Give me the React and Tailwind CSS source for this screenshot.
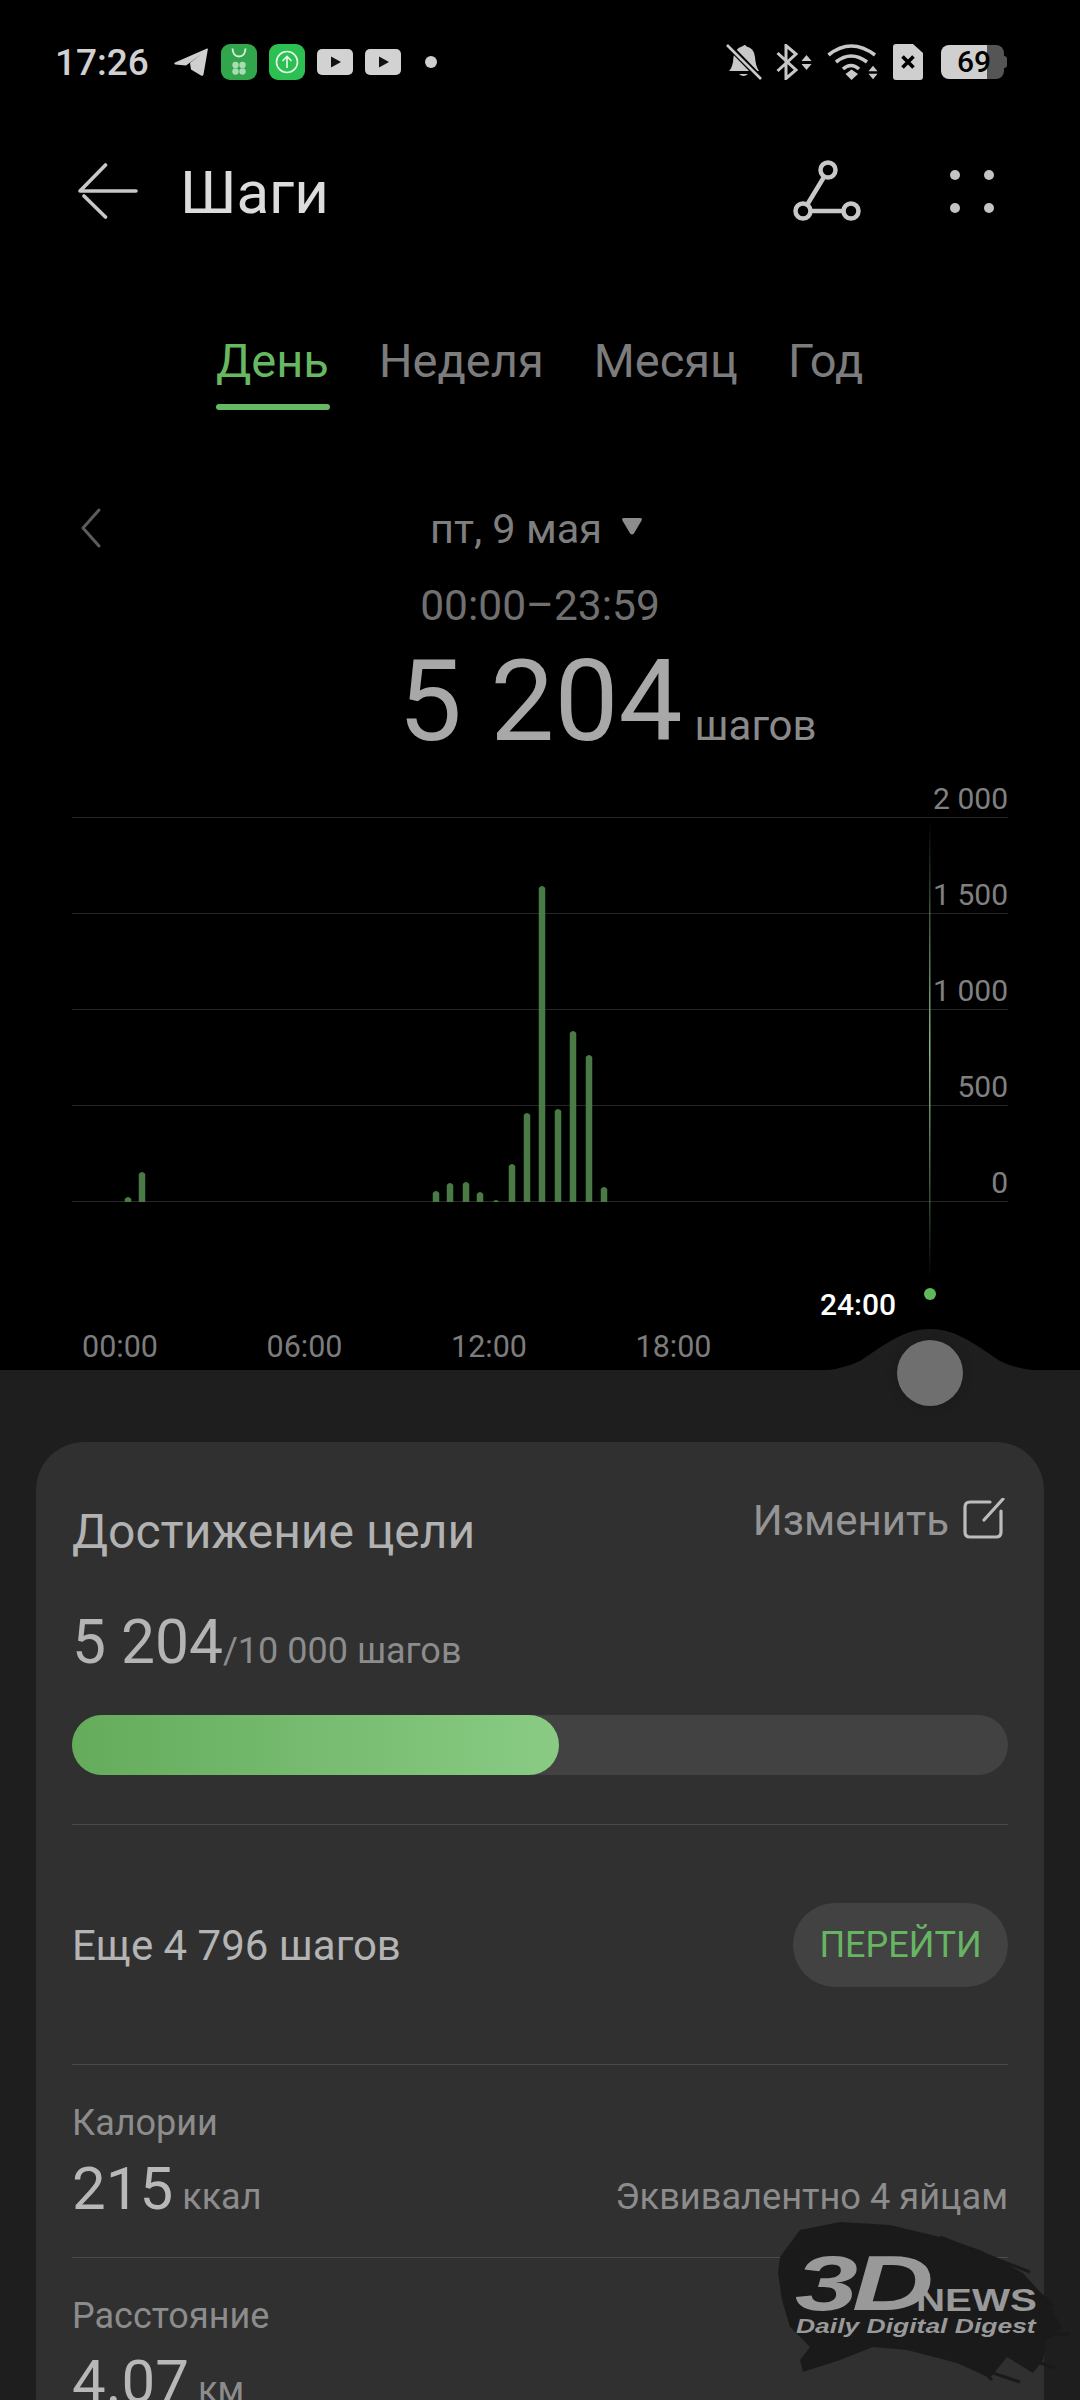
import React from 'react';

const bars = [
    [128, 1196], [142, 1171], [436, 1190], [450, 1182], [466, 1181], [480, 1191], [496, 1199],
    [512, 1163], [527, 1112], [542, 885], [558, 1108], [573, 1030], [589, 1054], [604, 1186],
];

const yLabels = ['1 500', '1 000', '500', '0'];
const xLabels = ['00:00', '06:00', '12:00', '18:00'];

const UpDown = ({ className }) => (
    <svg className={className} viewBox="0 0 11 15" fill="#c8c8c8">
        <path d="M5.5 0L10.5 6H0.5Z" />
        <path d="M5.5 15L10.5 9H0.5Z" />
    </svg>
);

const Youtube = () => (
    <svg className="w-[36px] h-[26px]" viewBox="0 0 36 26">
        <rect width="36" height="26" rx="5" fill="#d2d2d2" />
        <path d="M14 7.5L24 13L14 18.5Z" fill="#111" />
    </svg>
);

const StatusBar = () => (
    <div className="h-[124px] flex items-center pl-[55px] pr-[73px] text-[37px] font-medium text-[#d0d0d0]">
        <span className="w-[119px] leading-none">17:26</span>
        <svg className="w-[34px] h-[28px]" viewBox="0 0 34 28" fill="#cfcfcf">
            <path d="M1 14.5L33 0.5Q34 0 33.8 1.5L29.5 26.5Q29 28.5 27 27.4L17 21.5L16 15L27 6.5L12 17.5L1.2 16.5Q-0.5 15.5 1 14.5Z" />
        </svg>
        <svg className="ml-[13px] w-[36px] h-[36px]" viewBox="0 0 36 36">
            <rect width="36" height="36" rx="9" fill="#31a64c" />
            <path d="M11.5 4.5Q12 12.5 18 12.5Q24 12.5 24.5 4.5" fill="none" stroke="#d9f2de" strokeWidth="1.8" />
            <circle cx="14.5" cy="21" r="3.2" fill="#a8dcb2" />
            <circle cx="21.5" cy="21" r="3.2" fill="#a8dcb2" />
            <circle cx="14.5" cy="27.5" r="3.2" fill="#a8dcb2" />
            <circle cx="21.5" cy="27.5" r="3.2" fill="#a8dcb2" />
        </svg>
        <svg className="ml-[12px] w-[36px] h-[36px]" viewBox="0 0 36 36">
            <rect width="36" height="36" rx="9" fill="#2cc052" />
            <circle cx="18" cy="18" r="10.5" fill="none" stroke="#e8f8ec" strokeWidth="1.6" />
            <path d="M18 24V12.5M13.5 17L18 12.5L22.5 17" fill="none" stroke="#e8f8ec" strokeWidth="1.6" />
        </svg>
        <span className="ml-[12px]"><Youtube /></span>
        <span className="ml-[12px]"><Youtube /></span>
        <span className="ml-[24px] w-[12px] h-[12px] rounded-full bg-[#cfcfcf]" />
        <div className="ml-auto flex items-center">
            <svg className="w-[36px] h-[36px]" viewBox="0 0 36 36">
                <path d="M17 2Q19 0 20.5 2.5Q28 4 29 13Q29.5 22 33 27H3Q7 23 7.5 13Q8 5 17 2Z" fill="#c8c8c8" />
                <path d="M13 30Q17.500 34 22 30Z" fill="#c8c8c8" />
                <path d="M1 0L35 35" stroke="#000" strokeWidth="6" />
                <path d="M1 1L35 35" stroke="#c8c8c8" strokeWidth="2.6" />
            </svg>
            <svg className="ml-[14px] w-[22px] h-[36px]" viewBox="0 0 22 36" fill="none" stroke="#c8c8c8" strokeWidth="3">
                <path d="M1.500 9L20 26L10 34.500V1.500L20 10L1.500 27" />
            </svg>
            <UpDown className="ml-[3px] w-[11px] h-[15px]" />
            <svg className="ml-[15px] w-[50px] h-[36px]" viewBox="0 0 50 36" fill="none" stroke="#c8c8c8" strokeWidth="3.6">
                <path d="M1.500 11Q24 -7 48 11" />
                <path d="M9 18Q24 6 40 18" />
                <path d="M16 25Q24 18 32 25" />
                <path d="M18.500 30L24.500 25.500L31 30L24.500 36Z" fill="#c8c8c8" stroke="none" />
            </svg>
            <UpDown className="ml-[-9px] mt-[21px] w-[10px] h-[15px]" />
            <svg className="ml-[15px] w-[30px] h-[36px]" viewBox="0 0 30 36">
                <path d="M3 0H20L30 9V33Q30 36 27 36H3Q0 36 0 33V3Q0 0 3 0Z" fill="#cfcfcf" />
                <path d="M9.500 12.500L20.500 23.500M20.500 12.500L9.500 23.500" stroke="#000" strokeWidth="3.600" />
            </svg>
            <div className="relative ml-[18px] flex items-center">
                <div className="w-[46px] h-[34px] rounded-l-[8px] bg-[#cfcfcf]" />
                <div className="w-[17px] h-[34px] rounded-r-[8px] bg-[#555555]" />
                <div className="w-[3px] h-[12px] rounded-r-[3px] bg-[#555555]" />
                <span className="absolute left-[16px] top-0 leading-[34px] text-[30px] font-medium text-black">69</span>
            </div>
        </div>
    </div>
);

const Header = () => (
    <div className="h-[134px] flex items-center pl-[77px] pr-[86px] text-[#dcdcdc]">
        <svg className="w-[62px] h-[56px]" viewBox="0 0 62 56" fill="none" stroke="#c8c8c8" strokeWidth="3.600" strokeLinecap="round" strokeLinejoin="round">
            <path d="M59 28H3L28.500 2M7 33L28.500 54" />
        </svg>
        <h1 className="ml-[41px] mt-[3px] text-[60px] leading-none font-normal">Шаги</h1>
        <svg className="ml-auto w-[68px] h-[66px]" viewBox="0 0 68 66" fill="none" stroke="#c8c8c8" strokeWidth="4.500">
            <circle cx="35" cy="12" r="7.500" />
            <circle cx="10" cy="53" r="7.500" />
            <circle cx="58" cy="53" r="7.500" />
            <path d="M31 19L14 47M18 53H50" />
        </svg>
        <div className="ml-[89px] grid grid-cols-2 gap-x-[24px] gap-y-[23px]">
            <span className="w-[10px] h-[10px] rounded-full bg-[#c4c4c4]" />
            <span className="w-[10px] h-[10px] rounded-full bg-[#c4c4c4]" />
            <span className="w-[10px] h-[10px] rounded-full bg-[#c4c4c4]" />
            <span className="w-[10px] h-[10px] rounded-full bg-[#c4c4c4]" />
        </div>
    </div>
);

const Tabs = () => (
    <div className="mt-[75px] pl-[216px] flex text-[47px] leading-[56px] text-[#7c7c7c]">
        <div className="w-[114px] flex flex-col">
            <span className="text-[#67b863]">День</span>
            <span className="mt-[15px] h-[6px] rounded-full bg-[#67b863]" />
        </div>
        <span className="ml-[49px]">Неделя</span>
        <span className="ml-[50px]">Месяц</span>
        <span className="ml-[50px]">Год</span>
    </div>
);

const Summary = () => (
    <div>
        <div className="mt-[95px] relative flex items-center pl-[430px] h-[48px] text-[41.500px] leading-[48px] text-[#7e7e7e]">
            <svg className="absolute left-[80px] top-[3px] w-[22px] h-[40px]" viewBox="0 0 22 40" fill="none" stroke="#5c5c5c" strokeWidth="3" strokeLinecap="round" strokeLinejoin="round">
                <path d="M19 2L3 20L19 38" />
            </svg>
            <span>пт, 9 мая</span>
            <svg className="ml-[19px] mb-[6px] w-[22px] h-[17px]" viewBox="0 0 23 18" fill="#8c8c8c">
                <path d="M3 0H20Q23 0 21.500 3L13.500 16.500Q11.500 18.500 9.500 16.500L1.500 3Q0 0 3 0Z" />
            </svg>
        </div>
        <div className="mt-[28px] text-center text-[42.500px] leading-[50px] text-[#707070]">00:00–23:59</div>
        <div className="mt-[14px] pl-[398px] flex items-baseline text-[#a8a8a8]">
            <span className="text-[114px] leading-[112px]">5 204</span>
            <span className="ml-[12px] text-[42px] leading-[38px] text-[#8a8a8a]">шагов</span>
        </div>
    </div>
);

const Chart = () => (
    <div className="relative">
        <div className="mx-[72px] text-right text-[30px] leading-[36px] text-[#808080]">
            <div className="h-[61px] flex items-end justify-end border-b border-[#262626]">2 000</div>
            {yLabels.map((label) => (
                <div key={label} className="h-[96px] flex items-end justify-end border-b border-[#262626]">
                    {label}
                </div>
            ))}
        </div>
        <svg className="absolute left-0 top-0 w-[1080px] h-[530px]" viewBox="0 757 1080 530">
            <defs>
                <linearGradient id="cursor" x1="0" y1="0" x2="0" y2="1">
                    <stop offset="0" stopColor="#86b886" stopOpacity="0" />
                    <stop offset="0.2" stopColor="#86b886" stopOpacity="0.45" />
                    <stop offset="0.5" stopColor="#86b886" stopOpacity="1" />
                    <stop offset="0.8" stopColor="#86b886" stopOpacity="0.45" />
                    <stop offset="1" stopColor="#86b886" stopOpacity="0" />
                </linearGradient>
            </defs>
            <rect x="929" y="820" width="1.500" height="460" fill="url(#cursor)" />
            {bars.map(([x, top]) => (
                <path
                    key={x}
                    d={`M${x - 3.25} 1202V${top + 3}Q${x} ${top - 1} ${x + 3.25} ${top + 3}V1202Z`}
                    fill="#4a7a45"
                />
            ))}
        </svg>
        <div className="mt-[127px] pb-[5px] pl-[82px] flex text-[30.500px] leading-[36px] text-[#7c7c7c]">
            {xLabels.map((label) => (
                <span key={label} className="w-[184.500px]">{label}</span>
            ))}
        </div>
    </div>
);

const Handle = () => (
    <>
        <span className="absolute left-[820px] top-[-83px] text-[30px] leading-[36px] font-medium text-white">24:00</span>
        <span className="absolute left-[924px] top-[-82px] w-[12px] h-[12px] rounded-full bg-[#5fb85c]" />
        <svg className="absolute left-[810px] top-[-41px] w-[240px] h-[42px]" viewBox="0 0 240 42" fill="#1e1e1e">
            <path d="M0 42Q30 42 50 32C72 18 92 0 120 0C148 0 168 18 190 32Q210 42 240 42Z" />
        </svg>
        <span className="absolute left-[897px] top-[-30px] w-[66px] h-[66px] rounded-full bg-[#6f6f6f] shadow-[0_0_12px_rgba(0,0,0,0.18)]" />
    </>
);

const Metric = ({ label, value, unit, note }) => (
    <div className="border-t border-[#4b4b4b] pt-[37px] pb-[33px]">
        <div className="text-[36px] leading-[42px] text-[#8c8c8c]">{label}</div>
        <div className="mt-[10px] flex items-baseline">
            <span className="text-[60px] leading-[70px] text-[#b8b8b8]">{value}</span>
            <span className="ml-[9px] text-[36px] leading-[42px] text-[#8c8c8c]">{unit}</span>
            {note && <span className="ml-auto text-[36.200px] leading-[42px] text-[#8c8c8c]">{note}</span>}
        </div>
    </div>
);

const GoalCard = () => (
    <div className="h-[958px] overflow-hidden rounded-t-[48px] bg-[#303030] px-[36px] pt-[54px]">
        <div className="flex justify-between items-start">
            <h2 className="mt-[9px] text-[48px] leading-[54px] font-normal text-[#b2b2b2]">Достижение цели</h2>
            <div className="flex mr-[3px] text-[42px] leading-[50px] text-[#949494]">
                <span>Изменить</span>
                <svg className="ml-[14px] mt-[2px] w-[42px] h-[42px]" viewBox="0 0 42 42" fill="none" stroke="#bcbcbc" strokeWidth="3.200" strokeLinecap="round">
                    <path d="M27 4H7Q2 4 2 9V34Q2 39 7 39H33Q38 39 38 34V13" />
                    <path d="M21 22L40 1" />
                </svg>
            </div>
        </div>
        <div className="mt-[49px] flex items-baseline">
            <span className="text-[60.500px] leading-[70px] text-[#b4b4b4]">5 204</span>
            <span className="text-[36px] leading-[42px] text-[#8c8c8c]">/10 000 шагов</span>
        </div>
        <div className="mt-[37px] h-[60px] rounded-full bg-[#424242]">
            <div className="w-[487px] h-full rounded-full bg-gradient-to-r from-[#64ac5c] to-[#89cb83]" />
        </div>
        <div className="mt-[49px] h-[240px] border-t border-[#4b4b4b] flex items-center justify-between">
            <span className="mt-[2px] text-[42px] leading-[48px] text-[#b4b4b4]">Еще 4 796 шагов</span>
            <span className="w-[215px] h-[84px] rounded-full bg-[#424242] flex items-center justify-center text-[36px] text-[#66b563]">ПЕРЕЙТИ</span>
        </div>
        <Metric label="Калории" value="215" unit="ккал" note="Эквивалентно 4 яйцам" />
        <Metric label="Расстояние" value="4.07" unit="км" />
    </div>
);

// Watermark sits over the card in the bottom right corner
const Watermark = () => (
    <div className="absolute left-[770px] top-[2210px] w-[310px] h-[190px] font-['Liberation_Sans',sans-serif] text-[#999999]">
        <svg className="absolute left-0 top-0 w-[310px] h-[190px]" viewBox="0 0 310 190" fill="#1a1a1a">
            <path d="M10 47L30 20L70 12L120 15L170 27L210 40L253 63L277 90L292 118L277 130L273 150L263 163L237 147L220 168L187 153L137 140L103 137L70 150L33 162L30 150L40 137L20 117L12 90L8 63Z" />
            <path d="M170 27L260 62M230 50L284 96M262 150L285 158M215 163L222 170M190 152L250 172M268 125L300 124" stroke="#1a1a1a" strokeWidth="3" fill="none" />
        </svg>
        <span className="absolute left-[25px] top-[45px] origin-left scale-x-[1.450] italic font-bold text-[78px] leading-[56px] tracking-[-4px]">3D</span>
        <span className="absolute left-[146px] top-[79px] origin-left scale-x-[1.300] font-bold text-[31px] leading-[23px]">NEWS</span>
        <span className="absolute left-[26px] top-[106px] origin-left scale-x-[1.260] italic font-bold text-[21px] leading-[20px] whitespace-nowrap">Daily Digital Digest</span>
    </div>
);

export default function App() {
    return (
        <div className="relative w-[1080px] h-[2400px] overflow-hidden bg-black font-['Roboto',sans-serif]">
            <StatusBar />
            <Header />
            <Tabs />
            <Summary />
            <Chart />
            <div className="relative bg-[#1e1e1e] px-[36px] pt-[72px]">
                <Handle />
                <GoalCard />
            </div>
            <Watermark />
        </div>
    );
}
